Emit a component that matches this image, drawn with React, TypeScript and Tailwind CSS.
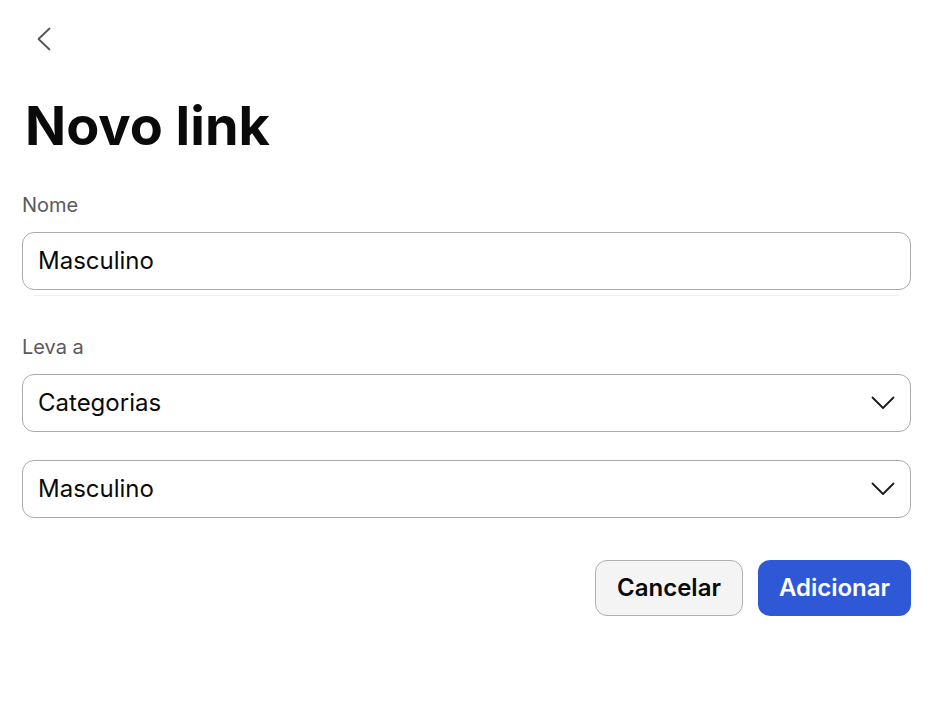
const FIELD =
  'flex h-[58px] w-full items-center rounded-[12px] border border-[#ababab] bg-white px-[15px] text-[24px] leading-none text-[#0a0a0a]';

function Select({ value }: { value: string }) {
  return (
    <div className={FIELD + ' justify-between'}>
      <span>{value}</span>
      <svg width="24" height="14" viewBox="0 0 24 14" fill="none" className="shrink-0 text-[#1a1a1a]">
        <polyline points="1.5,1.5 12,12 22.5,1.5" stroke="currentColor" strokeWidth="1.8" strokeLinecap="round" strokeLinejoin="round" />
      </svg>
    </div>
  );
}

export default function App() {
  return (
    <div className="min-h-[703px] bg-white pl-[22px] pr-[18px] pt-[27px] font-['Inter',sans-serif] text-[#0a0a0a]">
      <button type="button" className="ml-[14px] block text-[#555]" aria-label="Voltar">
        <svg width="16" height="24" viewBox="0 0 16 24" fill="none">
          <polyline points="13.5,1.5 2.5,12 13.5,22.5" stroke="currentColor" strokeWidth="1.8" strokeLinecap="round" strokeLinejoin="round" />
        </svg>
      </button>

      <h1 className="mt-[48px] pl-[3px] text-[54px] font-bold leading-[54px]">Novo link</h1>

      <label className="mt-[40px] block text-[20px] leading-[24px] text-[#5a5a5a]">Nome</label>
      <div className="mt-[15px]">
        <div className={FIELD}>Masculino</div>
        <div className="ml-[11px] mr-[12px] mt-[5px] h-px bg-[#eceef8]" />
      </div>

      <label className="mt-[39px] block text-[20px] leading-[24px] text-[#5a5a5a]">Leva a</label>
      <div className="mt-[15px] flex flex-col gap-[28px]">
        <Select value="Categorias" />
        <Select value="Masculino" />
      </div>

      <div className="mt-[42px] flex justify-end gap-[15px]">
        <button
          type="button"
          className="h-[56px] w-[148px] rounded-[12px] border border-[#b0b0b0] bg-[#f4f4f4] text-[24px] font-semibold text-[#0a0a0a]"
        >
          Cancelar
        </button>
        <button
          type="button"
          className="h-[56px] w-[153px] rounded-[12px] bg-[#2f58d6] text-[24px] font-semibold text-white"
        >
          Adicionar
        </button>
      </div>
    </div>
  );
}
